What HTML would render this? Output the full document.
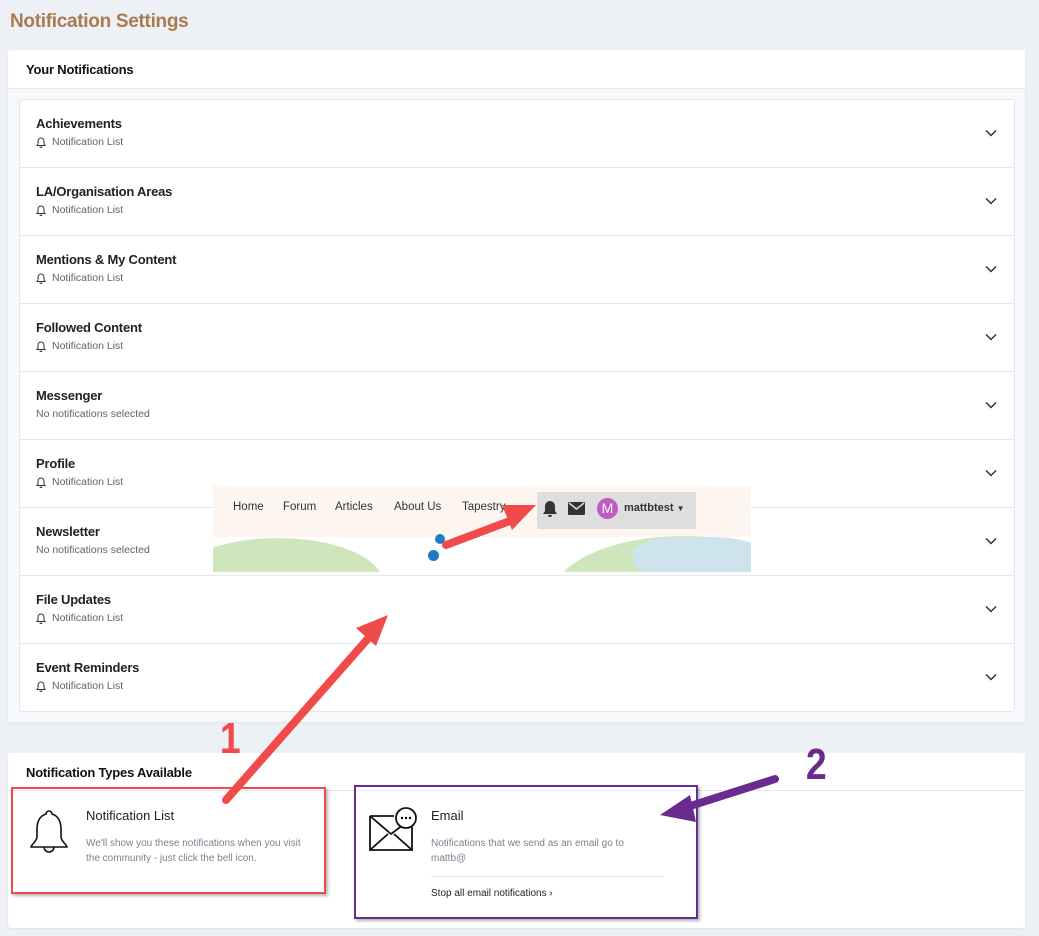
<!DOCTYPE html>
<html><head><meta charset="utf-8"><style>
*{box-sizing:border-box;margin:0;padding:0}
body{width:1039px;height:936px;background:#edf0f4;font-family:"Liberation Sans",sans-serif;position:relative;overflow:hidden;color:#222}
.abs{position:absolute}
h1{position:absolute;left:10px;top:11px;font-size:19px;color:#a87c4f;font-weight:bold;letter-spacing:-0.3px}
.card{position:absolute;left:8px;width:1017px;background:#fff;border-radius:3px;box-shadow:0 1px 2px rgba(0,0,0,.06)}
.hdr{height:39px;border-bottom:1px solid #e4e8ee;font-weight:bold;font-size:13px;padding:12px 0 0 18px;color:#111;letter-spacing:-0.2px}
.inner{background:#f6f8fb;padding:10px 10px 10px 11px}
.list{background:#fff;border:1px solid #e4e8ee;border-radius:3px}
.row{height:68px;border-bottom:1px solid #e4e8ee;position:relative;padding:16px 0 0 16px}
.row:last-child{border-bottom:none;height:67px}
.row b{font-size:13px;display:block;color:#222;letter-spacing:-0.2px}
.row span{font-size:10.5px;color:#5a6470;display:flex;align-items:center;margin-top:5px}
.row span svg{margin-right:6px}
.chev{position:absolute;right:17px;top:29px}
</style></head><body>
<h1>Notification Settings</h1>
<svg width="0" height="0" style="position:absolute"><defs>
<symbol id="b" viewBox="0 0 10 11"><path d="M5 1a3 3 0 0 0-3 3v3L1 8.5h8L8 7V4a3 3 0 0 0-3-3zM4 9.5a1 1 0 0 0 2 0" fill="none" stroke="#333" stroke-width="1"/></symbol>
<symbol id="c" viewBox="0 0 12 8"><path d="M1 1.5l5 5 5-5" fill="none" stroke="#333" stroke-width="1.5"/></symbol>
</defs></svg>
<div class="card" style="top:50px;height:672px">
<div class="hdr">Your Notifications</div>
<div class="inner"><div class="list">
<div class="row"><b>Achievements</b><span><svg width="10" height="11"><use href="#b"/></svg>Notification List</span><svg class="chev" width="12" height="8"><use href="#c"/></svg></div>
<div class="row"><b>LA/Organisation Areas</b><span><svg width="10" height="11"><use href="#b"/></svg>Notification List</span><svg class="chev" width="12" height="8"><use href="#c"/></svg></div>
<div class="row"><b>Mentions &amp; My Content</b><span><svg width="10" height="11"><use href="#b"/></svg>Notification List</span><svg class="chev" width="12" height="8"><use href="#c"/></svg></div>
<div class="row"><b>Followed Content</b><span><svg width="10" height="11"><use href="#b"/></svg>Notification List</span><svg class="chev" width="12" height="8"><use href="#c"/></svg></div>
<div class="row"><b>Messenger</b><span>No notifications selected</span><svg class="chev" width="12" height="8"><use href="#c"/></svg></div>
<div class="row"><b>Profile</b><span><svg width="10" height="11"><use href="#b"/></svg>Notification List</span><svg class="chev" width="12" height="8"><use href="#c"/></svg></div>
<div class="row"><b>Newsletter</b><span>No notifications selected</span><svg class="chev" width="12" height="8"><use href="#c"/></svg></div>
<div class="row"><b>File Updates</b><span><svg width="10" height="11"><use href="#b"/></svg>Notification List</span><svg class="chev" width="12" height="8"><use href="#c"/></svg></div>
<div class="row"><b>Event Reminders</b><span><svg width="10" height="11"><use href="#b"/></svg>Notification List</span><svg class="chev" width="12" height="8"><use href="#c"/></svg></div>
</div></div></div>

<div class="abs" style="left:213px;top:486px;width:538px;height:86px;background:#fff;overflow:hidden">
<div class="abs" style="left:0;top:0;width:538px;height:51px;background:#fdf6f0"></div>
<div class="abs" style="left:-40px;top:52px;width:210px;height:90px;border-radius:50%;background:#cfe6bd"></div>
<div class="abs" style="left:340px;top:50px;width:260px;height:120px;border-radius:50%;background:#cfe6bd"></div>
<div class="abs" style="left:420px;top:51px;width:130px;height:40px;border-radius:40%;background:#cde4ee"></div>
<div class="abs" style="left:215px;top:64px;width:11px;height:11px;border-radius:50%;background:#1e7cc4"></div>
<div class="abs" style="left:222px;top:48px;width:10px;height:10px;border-radius:50%;background:#1e7cc4"></div>
<div class="abs" style="left:20px;top:15px;font-size:11.5px;color:#333;white-space:nowrap">Home</div>
<div class="abs" style="left:70px;top:15px;font-size:11.5px;color:#333">Forum</div>
<div class="abs" style="left:122px;top:15px;font-size:11.5px;color:#333">Articles</div>
<div class="abs" style="left:181px;top:15px;font-size:11.5px;color:#333">About Us</div>
<div class="abs" style="left:249px;top:15px;font-size:11.5px;color:#333;white-space:nowrap">Tapestry <span style="font-size:8px">▼</span></div>
<div class="abs" style="left:324px;top:6px;width:159px;height:37px;background:#dedede;border-radius:2px"></div>
<svg class="abs" style="left:329px;top:14px" width="16" height="18" viewBox="0 0 16 18"><path d="M8 1a5 5 0 0 0-5 5v5l-2 3h14l-2-3V6a5 5 0 0 0-5-5zM6 15a2 2 0 0 0 4 0z" fill="#333"/></svg>
<svg class="abs" style="left:355px;top:16px" width="17" height="13" viewBox="0 0 17 13"><rect width="17" height="13" rx="1" fill="#333"/><path d="M1 1l7.5 6L16 1" stroke="#dedede" stroke-width="1.5" fill="none"/></svg>
<div class="abs" style="left:384px;top:12px;width:21px;height:21px;border-radius:50%;background:#c25ac1;color:#fff;font-size:14px;text-align:center;line-height:21px">M</div>
<div class="abs" style="left:411px;top:16px;font-size:11px;font-weight:bold;color:#333">mattbtest <span style="font-size:8px">▼</span></div>
</div>

<div class="card" style="top:753px;height:175px">
<div class="hdr" style="height:38px">Notification Types Available</div>
</div>
<div class="abs" style="left:86px;top:808px;font-size:13px;color:#222">Notification List</div>
<div class="abs" style="left:86px;top:836px;font-size:10px;color:#7a8290;line-height:15px;width:225px">We'll show you these notifications when you visit the community - just click the bell icon.</div>
<svg class="abs" style="left:27px;top:808px" width="44" height="50" viewBox="0 0 44 50"><path d="M22 3a3 3 0 0 0-3 3c-7 2-9 9-9 15v8c0 4-6 8-6 10h36c0-2-6-6-6-10v-8c0-6-2-13-9-15a3 3 0 0 0-3-3zM17 39a5 5 0 0 0 10 0" fill="none" stroke="#111" stroke-width="1.6"/></svg>
<div class="abs" style="left:431px;top:808px;font-size:13px;color:#222">Email</div>
<div class="abs" style="left:431px;top:836px;font-size:10px;color:#7a8290;line-height:15px;width:225px">Notifications that we send as an email go to<br>mattb@</div>
<div class="abs" style="left:431px;top:876px;width:233px;border-top:1px solid #e4e8ee"></div>
<div class="abs" style="left:431px;top:888px;font-size:10px;color:#222">Stop all email notifications ›</div>
<svg class="abs" style="left:368px;top:806px" width="56" height="46" viewBox="0 0 56 46"><path d="M2 10h24M44 20v24H2V10M2 44l18-16M44 44L26 28M2 10l21 18 12-9" fill="none" stroke="#111" stroke-width="1.8"/><circle cx="38" cy="12" r="10" fill="#fff" stroke="#111" stroke-width="1.8"/><circle cx="34" cy="12" r="1.2"/><circle cx="38" cy="12" r="1.2"/><circle cx="42" cy="12" r="1.2"/></svg>
<div class="abs" style="left:11px;top:787px;width:315px;height:107px;border:2px solid #f04a4a;box-shadow:2px 2px 3px rgba(0,0,0,.3)"></div>
<div class="abs" style="left:354px;top:785px;width:344px;height:134px;border:2px solid #6a2b8e;box-shadow:2px 2px 3px rgba(0,0,0,.3)"></div>
<div class="abs" style="left:218px;top:714px;font-size:44px;font-weight:bold;color:#f04a4a;transform:scaleX(0.85)">1</div>
<div class="abs" style="left:804px;top:740px;font-size:44px;font-weight:bold;color:#6a2b8e;transform:scaleX(0.85)">2</div>
<svg class="abs" style="left:0;top:0" width="1039" height="936">
<g stroke-linecap="round" fill="none" stroke-width="8">
<path d="M226 800L372 634" stroke="#f04a4a"/>
<path d="M446 545L515 519" stroke="#f04a4a"/>
<path d="M775 779L684 808" stroke="#6a2b8e"/>
</g>
<path d="M388 615L356 628L376 646Z" fill="#f04a4a"/>
<path d="M536 505L502 505L512 530Z" fill="#f04a4a"/>
<path d="M660 815L690 795L696 822Z" fill="#6a2b8e"/>
</svg>
</body></html>
